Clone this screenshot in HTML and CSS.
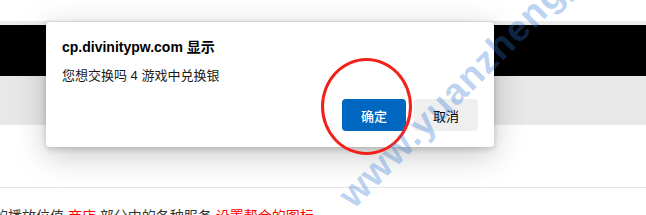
FILE: index.html
```html
<!DOCTYPE html>
<html lang="zh-CN">
<head>
<meta charset="utf-8">
<title>cp.divinitypw.com</title>
<link rel="stylesheet" href="styles.css">
</head>
<body>
<div class="page">
  <div class="top-gap"></div>
  <div class="strip"></div>
  <div class="black-bar"></div>
  <div class="grey-bar"></div>
  <div class="white-area"></div>
  <div class="rule"></div>
  <div class="content">
    <p class="line">的播放位值 <span class="red">商店</span> 部分中的各种服务 <span class="red">设置帮会的图标</span></p>
  </div>
</div>

<div class="dialog">
  <div class="dialog-title">cp.divinitypw.com 显示</div>
  <div class="dialog-msg">您想交换吗 4 游戏中兑换银</div>
  <div class="dialog-buttons">
    <button class="btn btn-ok">确定</button>
    <button class="btn btn-cancel">取消</button>
  </div>
</div>

<div class="circle"></div>
<div class="watermark">www.yuanzhengj</div>
</body>
</html>
```

FILE: styles.css
```css
html, body {
  margin: 0;
  padding: 0;
  width: 646px;
  height: 215px;
  overflow: hidden;
  background: #ffffff;
  font-family: "Liberation Sans", "Noto Sans CJK SC", sans-serif;
}

.page {
  display: flex;
  flex-direction: column;
}

.top-gap { height: 21px; background: #ffffff; }
.strip { height: 4px; background: #ececec; }
.black-bar { height: 51px; background: #000000; }
.grey-bar { height: 49px; background: #e8e8e8; }
.white-area { height: 62px; background: #ffffff; }
.rule { height: 1px; background: #e5e5e5; }

.content {
  padding-top: 18px;
}

.line {
  margin: 0;
  font-size: 14px;
  line-height: 20px;
  color: #333333;
  white-space: nowrap;
  text-indent: -6px;
}

.red { color: #ff0000; }

.dialog {
  position: absolute;
  left: 46px;
  top: 22px;
  width: 448px;
  height: 125px;
  box-sizing: border-box;
  padding: 15px 16px 16px 16px;
  background: #ffffff;
  border-radius: 4px;
  box-shadow: 0 8px 32px rgba(0, 0, 0, 0.22), 0 2px 6px rgba(0, 0, 0, 0.18);
  display: flex;
  flex-direction: column;
}

.dialog-title {
  font-size: 14px;
  font-weight: bold;
  line-height: 20px;
  color: #000000;
}

.dialog-msg {
  margin-top: 10px;
  font-size: 13px;
  line-height: 18px;
  color: #1a1a1a;
}

.dialog-buttons {
  margin-top: 14px;
  display: flex;
  justify-content: flex-end;
  gap: 8px;
}

.btn {
  width: 64px;
  height: 32px;
  border: none;
  border-radius: 4px;
  font-family: "Liberation Sans", "Noto Sans CJK SC", sans-serif;
  font-size: 13px;
  padding: 0;
}

.btn-ok {
  background: #0067c0;
  color: #ffffff;
  font-weight: 500;
}

.btn-cancel {
  background: #efefef;
  color: #000000;
}

.circle {
  position: absolute;
  left: 321px;
  top: 58px;
  width: 85px;
  height: 91px;
  border: 3px solid #f2221b;
  border-radius: 50%;
}

.watermark {
  position: absolute;
  left: 358px;
  top: 178px;
  height: 36px;
  font-size: 37px;
  line-height: 36px;
  font-weight: bold;
  letter-spacing: 1px;
  color: rgba(43, 120, 211, 0.33);
  white-space: nowrap;
  transform-origin: left bottom;
  transform: rotate(-45deg);
}
```
